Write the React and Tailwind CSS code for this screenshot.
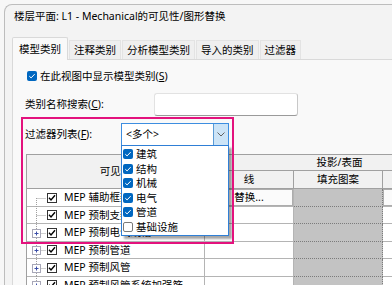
import React from 'react';

const font = "font-['Noto_Sans','Noto_Sans_CJK_SC',sans-serif]";

function BlueCheck({ checked = true }) {
    if (!checked) {
        return <span className="h-[10px] w-[10px] shrink-0 rounded-[2px] border border-[#7a7a7a] bg-white" />;
    }
    return (
        <span className="flex h-[10px] w-[10px] shrink-0 items-center justify-center rounded-[2px] bg-[#0067c0]">
            <svg width="8" height="8" viewBox="0 0 8 8">
                <path d="M1.3 4.2 L3.1 5.9 L6.7 2.1" fill="none" stroke="#fff" strokeWidth="1" />
            </svg>
        </span>
    );
}

function OldCheck() {
    return (
        <span className="flex h-[10px] w-[10px] shrink-0 items-center justify-center border border-[#333] bg-white">
            <svg width="8" height="8" viewBox="0 0 8 8">
                <path d="M1 3.8 L3 6 L7 1.2" fill="none" stroke="#000" strokeWidth="1.4" />
            </svg>
        </span>
    );
}

function Tree({ plus, first }) {
    return (
        <svg width="20" height="18" viewBox="0 0 20 18" className="shrink-0">
            <path d={first ? 'M9.5 9 V18' : 'M9.5 0 V18'} stroke="#a0a0a0" strokeDasharray="1 1" />
            <path d="M9.5 9.5 H19" stroke="#a0a0a0" strokeDasharray="1 1" />
            {plus && (
                <g>
                    <rect x="5.5" y="5.5" width="8" height="8" fill="#fff" stroke="#a8a8b8" />
                    <path d="M7.5 9.5 H11.5 M9.5 7.5 V11.5" stroke="#3c4fa8" />
                </g>
            )}
        </svg>
    );
}

const rows = [
    { name: 'MEP 辅助框架', h: 'h-[18px]', first: true, selected: true },
    { name: 'MEP 预制支架', h: 'h-[17px]' },
    { name: 'MEP 预制电气线槽', h: 'h-[18px]', plus: true },
    { name: 'MEP 预制管道', h: 'h-[17px]', plus: true },
    { name: 'MEP 预制风管', h: 'h-[18px]', plus: true },
    { name: 'MEP 预制风管系统加强筋', h: 'h-[17px]', plus: true },
];

const filters = [
    { label: '建筑', checked: true },
    { label: '结构', checked: true },
    { label: '机械', checked: true },
    { label: '电气', checked: true },
    { label: '管道', checked: true },
    { label: '基础设施', checked: false },
];

export default function App() {
    return (
        <div className={`relative h-[285px] w-[392px] overflow-hidden bg-[#f7f7f7] text-[10.5px] leading-none text-black ${font}`}>
            <div className="ml-[4px] mt-[4px] h-[300px] w-[600px] rounded-tl-[8px] border-l border-t border-[#bdbdbd] bg-[#f3f3f3]">
                <div className="flex h-[22px] items-center pl-[9px] text-[10.5px]">
                    楼层平面: L1 - Mechanical的可见性/图形替换
                </div>

                <div className="ml-[7px] mt-[10px] flex h-[22px] items-end gap-[1px]">
                    <div className="relative z-10 -mb-px flex h-[23px] items-center rounded-t-[2px] border border-b-0 border-[#d9d9d9] bg-[#f9f9f9] px-[6px]">
                        模型类别
                    </div>
                    {['注释类别', '分析模型类别', '导入的类别', '过滤器'].map((t) => (
                        <div
                            key={t}
                            className="flex h-[19px] items-center border border-b-0 border-[#e3e3e3] bg-[#efefef] px-[4px]"
                        >
                            {t}
                        </div>
                    ))}
                </div>

                <div className="ml-[7px] h-[240px] border-l border-t border-[#d9d9d9] bg-[#f9f9f9] pl-[12px]">
                    <div className="ml-[2px] mt-[8px] flex h-[16px] items-center gap-[3px]">
                        <BlueCheck />
                        <span>
                            在此视图中显示模型类别(<span className="underline">S</span>)
                        </span>
                    </div>

                    <div className="mt-[9px] flex h-[23px] items-center">
                        <span className="w-[129px] shrink-0">
                            类别名称搜索(<span className="underline">C</span>):
                        </span>
                        <div className="h-[23px] w-[144px] shrink-0 rounded-[3px] border border-[#e2e2e2] border-b-[#9a9a9a] border-r-[#c8c8c8] bg-white" />
                    </div>

                    <div className="mt-[7px] flex h-[23px] items-center">
                        <span className="w-[96px] shrink-0">
                            过滤器列表(<span className="underline">F</span>):
                        </span>
                        <div className="relative z-20 flex h-[23px] w-[108px] shrink-0 items-stretch border border-[#3d8ee0] bg-white">
                            <span className="flex flex-1 items-center pl-[4px]">&lt;多个&gt;</span>
                            <span className="flex w-[15px] items-center justify-center border-l border-[#5b9bd5] bg-[#cce4f7]">
                                <svg width="8" height="5" viewBox="0 0 8 5">
                                    <path d="M0.5 0.5 L4 4 L7.5 0.5" fill="none" stroke="#606060" strokeWidth="1" />
                                </svg>
                            </span>

                            <div className="absolute left-[-1px] top-full w-[108px] border border-[#2f7fd6] bg-white pb-[1px] pl-[1px] pt-[1px] shadow-[3px_3px_2px_rgba(0,0,0,0.35)]">
                                {filters.map((f) => (
                                    <div key={f.label} className="flex h-[14.5px] items-center gap-[3px]">
                                        <BlueCheck checked={f.checked} />
                                        <span>{f.label}</span>
                                    </div>
                                ))}
                            </div>
                        </div>
                    </div>

                    <div className="ml-[1px] mt-[8px] w-[480px] border-l border-t border-[#a0a0a0]">
                        <div className="flex bg-[#f1f1f1]">
                            <div className="flex h-[34px] w-[178px] shrink-0 items-center justify-center border-b border-r border-[#a0a0a0]">
                                可见性
                            </div>
                            <div className="flex shrink-0 flex-col">
                                <div className="flex h-[16px] w-[270px] items-center justify-center border-b border-r border-[#a0a0a0]">
                                    投影/表面
                                </div>
                                <div className="flex h-[18px]">
                                    <div className="flex w-[89px] shrink-0 items-center justify-center border-b border-r border-[#a0a0a0]">
                                        线
                                    </div>
                                    <div className="flex w-[89px] shrink-0 items-center justify-center border-b border-r border-[#a0a0a0]">
                                        填充图案
                                    </div>
                                    <div className="flex w-[92px] shrink-0 items-center justify-center border-b border-r border-[#a0a0a0]">
                                        透明度
                                    </div>
                                </div>
                            </div>
                        </div>

                        {rows.map((r) => (
                            <div key={r.name} className={`flex bg-white ${r.h}`}>
                                <div className="flex w-[178px] shrink-0 items-center border-b border-r border-[#b4b4b4]">
                                    <Tree plus={r.plus} first={r.first} />
                                    <OldCheck />
                                    <span className="ml-[7px] whitespace-nowrap">{r.name}</span>
                                </div>
                                <div className="flex w-[89px] shrink-0 border-b border-r border-[#b4b4b4]">
                                    {r.selected && (
                                        <span className="flex flex-1 items-center justify-center border border-[#adadad] bg-[#fbfbfb]">
                                            替换...
                                        </span>
                                    )}
                                </div>
                                <div className="w-[89px] shrink-0 border-b border-r border-dotted border-[#7c7c7c] bg-[#c3c3c3]" />
                                <div className="flex w-[92px] shrink-0 border-b border-r border-[#b4b4b4]">
                                    {r.selected && (
                                        <span className="flex flex-1 items-center justify-center border border-[#adadad] bg-[#fbfbfb]">
                                            替换...
                                        </span>
                                    )}
                                </div>
                            </div>
                        ))}
                    </div>
                </div>
            </div>

            <div className="pointer-events-none absolute left-[21px] top-[117px] z-30 h-[127px] w-[213px] border-2 border-[#e3127d]" />
        </div>
    );
}
